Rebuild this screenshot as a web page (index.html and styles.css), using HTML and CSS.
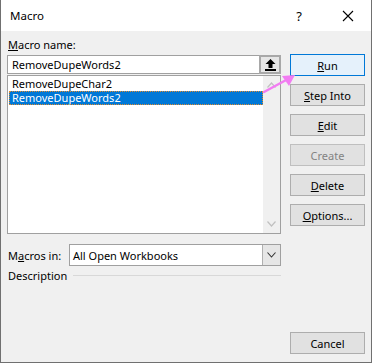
FILE: index.html
```html
<!DOCTYPE html>
<html>
<head>
<meta charset="utf-8">
<link rel="stylesheet" href="styles.css">
</head>
<body>
<div class="dialog">
  <div class="titlebar">
    <span class="title">Macro</span>
    <span class="help">?</span>
    <svg class="close" width="12" height="12" viewBox="0 0 12 12"><path d="M1 1 L11 11 M11 1 L1 11" stroke="#000" stroke-width="1.1" fill="none"/></svg>
  </div>
  <div class="body">
    <div class="left">
      <div class="lbl"><u>M</u>acro name:</div>
      <div class="namebox">
        <span class="nametext">RemoveDupeWords2</span>
        <span class="upbtn"><svg width="11" height="12" viewBox="0 0 11 12"><path d="M5.5 0 L10.5 5 L7.5 5 L7.5 9 L3.5 9 L3.5 5 L0.5 5 Z" fill="#000"/><rect x="0" y="10" width="11" height="2" fill="#000"/></svg></span>
      </div>
      <div class="list">
        <div class="items">
          <div class="item">RemoveDupeChar2</div>
          <div class="item sel">RemoveDupeWords2</div>
        </div>
        <div class="scroll">
          <svg width="9" height="6" viewBox="0 0 9 6"><path d="M0.5 5.5 L4.5 1 L8.5 5.5" stroke="#c0c0c0" stroke-width="1.2" fill="none"/></svg>
          <svg width="9" height="6" viewBox="0 0 9 6"><path d="M0.5 0.5 L4.5 5 L8.5 0.5" stroke="#c0c0c0" stroke-width="1.2" fill="none"/></svg>
        </div>
      </div>
      <div class="row-in">
        <span class="lbl2">M<u>a</u>cros in:</span>
        <div class="combo">
          <span class="combotext">All Open Workbooks</span>
          <span class="drop"><svg width="9" height="6" viewBox="0 0 9 6"><path d="M0.5 0.5 L4.5 5 L8.5 0.5" stroke="#333" stroke-width="1.1" fill="none"/></svg></span>
        </div>
      </div>
      <div class="desc">
        <span>Description</span>
        <span class="rule"></span>
      </div>
    </div>
    <div class="right">
      <div class="btn default"><u>R</u>un</div>
      <div class="btn"><u>S</u>tep Into</div>
      <div class="btn"><u>E</u>dit</div>
      <div class="btn disabled">Create</div>
      <div class="btn"><u>D</u>elete</div>
      <div class="btn"><u>O</u>ptions...</div>
      <div class="btn cancel">Cancel</div>
    </div>
  </div>
  <svg class="arrow" width="40" height="24" viewBox="0 0 40 24">
    <path d="M2 19 L26 6" stroke="#f27cf2" stroke-width="2.5" fill="none" stroke-linecap="round"/>
    <path d="M33 2 L20 3 L27 13 Z" fill="#f27cf2"/>
  </svg>
</div>
</body>
</html>
```
FILE: styles.css
```css
* { box-sizing: border-box; }
html, body { margin: 0; padding: 0; }
body {
  font-family: "Segoe UI", "Noto Sans", sans-serif;
  font-size: 11px;
  color: #000;
  background: #fff;
}
.dialog {
  position: relative;
  width: 372px;
  height: 363px;
  display: flex;
  flex-direction: column;
  border-left: 1px solid #707070;
  border-right: 1px solid #707070;
  border-bottom: 1px solid #707070;
  background: #f0f0f0;
}
.titlebar {
  height: 31px;
  background: #fff;
  display: flex;
  align-items: center;
  padding-left: 9px;
  font-size: 11.5px;
}
.title { flex: 1; }
.help { margin-right: 40px; font-size: 13px; }
.close { margin-right: 17px; }
.body {
  flex: 1;
  display: flex;
  padding: 6px 6px 8px 6px;
  gap: 9px;
}
.left { width: 274px; display: flex; flex-direction: column; }
.lbl { height: 18px; line-height: 16px; padding-left: 1px; }
.namebox {
  height: 19px;
  border: 1px solid #a0a0a0;
  background: #fff;
  display: flex;
  align-items: center;
  padding-left: 4px;
}
.nametext { flex: 1; }
.upbtn {
  width: 22px;
  height: 19px;
  margin-right: -1px;
  border: 2px solid #a8a8a8;
  background: #e6e6e6;
  display: flex;
  align-items: center;
  justify-content: center;
}
.list {
  margin-top: 1px;
  height: 159px;
  border: 1px solid #a0a0a0;
  background: #fff;
  display: flex;
}
.items { flex: 1; padding-top: 1px; padding-left: 1px; }
.item { height: 14px; line-height: 14px; padding-left: 3px; }
.item.sel {
  background: #0078d7;
  color: #fff;
  outline: 1px dotted #e08b2e;
  outline-offset: -1px;
}
.scroll {
  width: 17px;
  background: #f0f0f0;
  display: flex;
  flex-direction: column;
  justify-content: space-between;
  align-items: center;
  padding: 6px 0 6px;
}
.row-in {
  margin-top: 10px;
  display: flex;
  align-items: center;
}
.lbl2 { width: 62px; padding-left: 1px; }
.combo {
  flex: 1;
  height: 22px;
  border: 1px solid #a0a0a0;
  background: #fff;
  display: flex;
  align-items: center;
  padding-left: 3px;
}
.combotext { flex: 1; }
.drop {
  width: 18px;
  height: 20px;
  background: #e6e6e6;
  border-left: 1px solid #b0b0b0;
  display: flex;
  align-items: center;
  justify-content: center;
}
.desc {
  margin-top: 2px;
  display: flex;
  align-items: center;
  gap: 6px;
  padding-left: 1px;
}
.rule { flex: 1; height: 1px; background: #d8d8d8; }
.right {
  width: 75px;
  display: flex;
  flex-direction: column;
  gap: 8px;
  padding-top: 17px;
}
.btn {
  height: 22px;
  border: 1px solid #adadad;
  background: #e1e1e1;
  display: flex;
  align-items: center;
  justify-content: center;
}
.btn.default { border-color: #0078d7; background: #e5f1fb; }
.btn.disabled { color: #838383; border-color: #bfbfbf; background: #e1e1e1; }
.btn.cancel { margin-top: auto; }
.arrow {
  position: absolute;
  left: 261px;
  top: 73px;
}
```
